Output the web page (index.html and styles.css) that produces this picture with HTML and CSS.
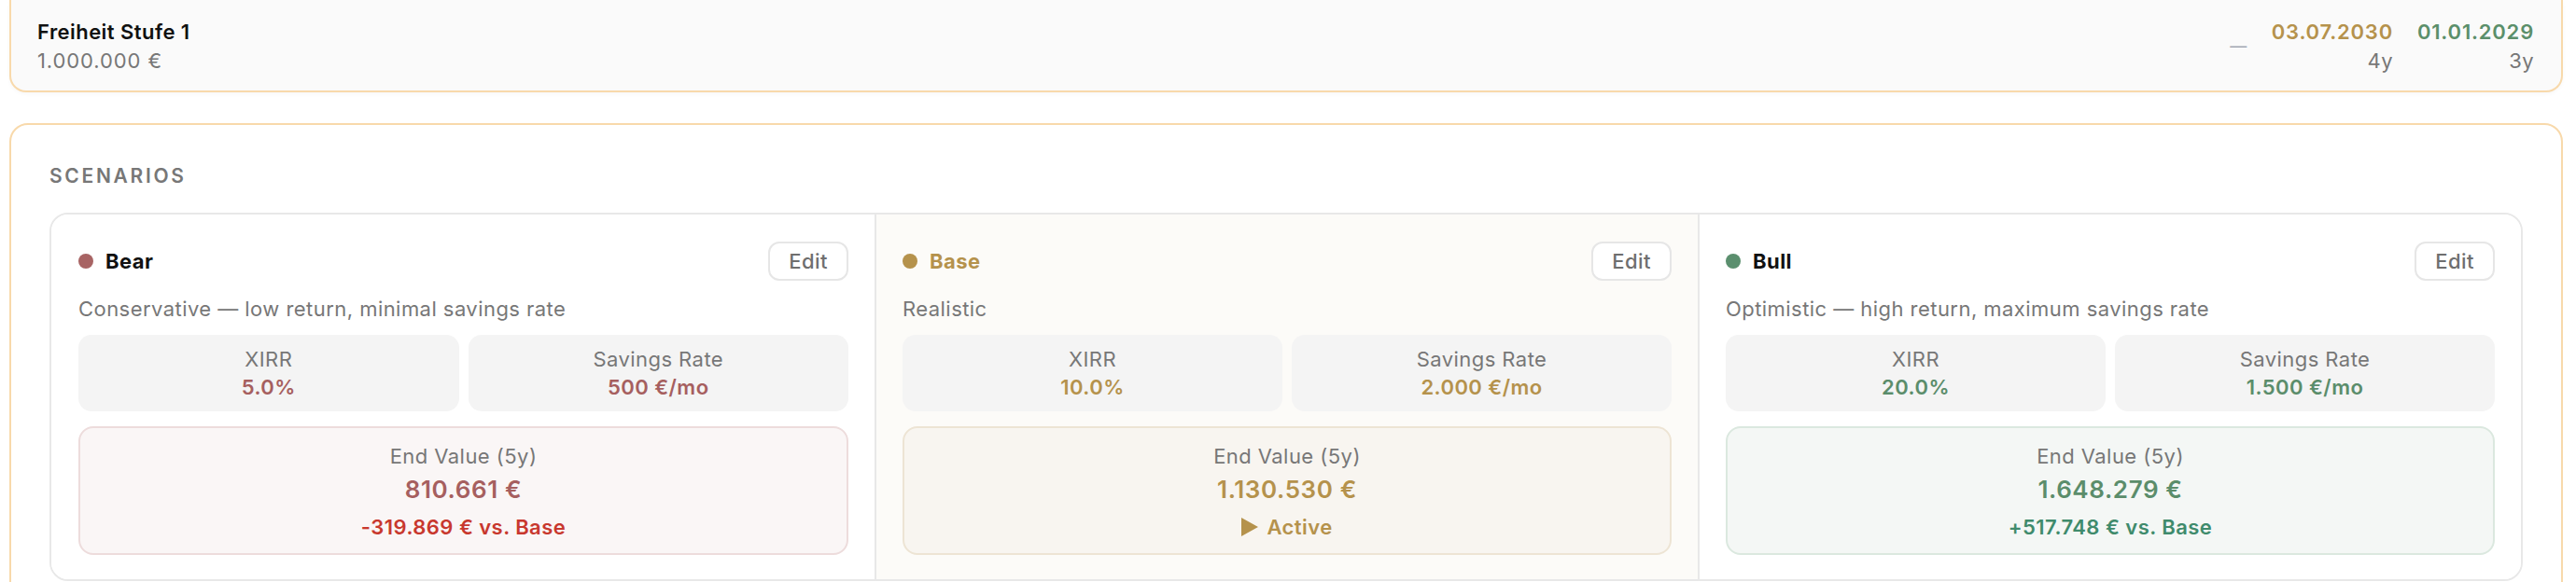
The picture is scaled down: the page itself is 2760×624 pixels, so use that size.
FILE: index.html
```html
<!DOCTYPE html>
<html lang="de">
<head>
<meta charset="utf-8">
<title>Scenarios</title>
<link rel="stylesheet" href="styles.css">
</head>
<body>
<div class="page">
  <div class="goal-card">
    <div class="goal-info">
      <div class="goal-title">Freiheit Stufe 1</div>
      <div class="goal-amount">1.000.000 €</div>
    </div>
    <div class="goal-dates">
      <span class="goal-dash">—</span>
      <div class="goal-date">
        <div class="date-val date-base">03.07.2030</div>
        <div class="date-sub">4y</div>
      </div>
      <div class="goal-date">
        <div class="date-val date-bull">01.01.2029</div>
        <div class="date-sub">3y</div>
      </div>
    </div>
  </div>

  <div class="scen-card">
    <div class="scen-heading">SCENARIOS</div>
    <div class="scen-grid">
      <div class="scen-col">
        <div class="scen-head">
          <div class="scen-name"><span class="dot dot-bear"></span><span class="name">Bear</span></div>
          <button class="edit-btn">Edit</button>
        </div>
        <div class="scen-desc">Conservative — low return, minimal savings rate</div>
        <div class="metrics">
          <div class="metric"><div class="m-label">XIRR</div><div class="m-val c-bear">5.0%</div></div>
          <div class="metric"><div class="m-label">Savings Rate</div><div class="m-val c-bear">500 €/mo</div></div>
        </div>
        <div class="endbox end-bear">
          <div class="e-label">End Value (5y)</div>
          <div class="e-val c-bear">810.661 €</div>
          <div class="e-delta d-neg">-319.869 € vs. Base</div>
        </div>
      </div>

      <div class="scen-col col-base">
        <div class="scen-head">
          <div class="scen-name"><span class="dot dot-base"></span><span class="name c-base">Base</span></div>
          <button class="edit-btn">Edit</button>
        </div>
        <div class="scen-desc">Realistic</div>
        <div class="metrics">
          <div class="metric"><div class="m-label">XIRR</div><div class="m-val c-base">10.0%</div></div>
          <div class="metric"><div class="m-label">Savings Rate</div><div class="m-val c-base">2.000 €/mo</div></div>
        </div>
        <div class="endbox end-base">
          <div class="e-label">End Value (5y)</div>
          <div class="e-val c-base">1.130.530 €</div>
          <div class="e-delta c-base"><svg class="tri" width="18" height="20" viewBox="0 0 18 20"><polygon points="0,0 18,10 0,20" fill="#b5924c"/></svg>Active</div>
        </div>
      </div>

      <div class="scen-col">
        <div class="scen-head">
          <div class="scen-name"><span class="dot dot-bull"></span><span class="name">Bull</span></div>
          <button class="edit-btn">Edit</button>
        </div>
        <div class="scen-desc">Optimistic — high return, maximum savings rate</div>
        <div class="metrics">
          <div class="metric"><div class="m-label">XIRR</div><div class="m-val c-bull">20.0%</div></div>
          <div class="metric"><div class="m-label">Savings Rate</div><div class="m-val c-bull">1.500 €/mo</div></div>
        </div>
        <div class="endbox end-bull">
          <div class="e-label">End Value (5y)</div>
          <div class="e-val c-bull">1.648.279 €</div>
          <div class="e-delta d-pos">+517.748 € vs. Base</div>
        </div>
      </div>
    </div>
  </div>
</div>
</body>
</html>
```

FILE: styles.css
```css
* { box-sizing: border-box; }
html, body { margin: 0; padding: 0; background: #ffffff; }
body {
  font-family: Inter, "Noto Sans", "DejaVu Sans", sans-serif;
  font-size: 22px;
  letter-spacing: 0.45px;
  color: #111111;
}
.page { padding: 0 14px 0 10px; }

.goal-card {
  display: flex;
  justify-content: space-between;
  align-items: center;
  background: #fafafa;
  border: 2px solid #f8d9ab;
  border-top: none;
  border-radius: 0 0 18px 18px;
  padding: 19px 29px 17px 28px;
  box-shadow: 0 2px 4px rgba(0,0,0,0.03);
}
.goal-title { font-weight: 600; line-height: 30px; color: #111; }
.goal-amount { line-height: 30px; color: #777777; margin-top: 1px; letter-spacing: 0.9px; }
.goal-dates { display: flex; align-items: center; gap: 26px; }
.goal-dash { color: #a3a8b3; font-size: 18px; line-height: 20px; }
.goal-date { text-align: right; }
.date-val { font-weight: 600; line-height: 30px; letter-spacing: 0.8px; }
.date-sub { line-height: 30px; color: #777777; margin-top: 1px; }
.date-base { color: #b5924c; }
.date-bull { color: #5b8f6a; }

.scen-card {
  margin-top: 33px;
  background: #ffffff;
  border: 2px solid #f8d9ab;
  border-radius: 20px;
  padding: 41px 41px 40px 41px;
}
.scen-heading {
  font-size: 21px;
  font-weight: 600;
  letter-spacing: 2.7px;
  color: #777777;
  line-height: 28px;
  margin-bottom: 25px;
}
.scen-grid {
  display: grid;
  grid-template-columns: 1fr 1fr 1fr;
  border: 2px solid #e8e8e8;
  border-radius: 20px;
  overflow: hidden;
}
.scen-col {
  padding: 29px 28px 26px 28px;
  border-left: 2px solid #e8e8e8;
  background: #ffffff;
}
.scen-col:first-child { border-left: none; padding-left: 29px; }
.col-base { background: #fcfbf8; }

.scen-head { display: flex; justify-content: space-between; align-items: center; height: 42px; }
.scen-name { display: flex; align-items: center; gap: 13px; }
.name { font-weight: 700; line-height: 30px; }
.dot { width: 16px; height: 16px; border-radius: 50%; display: inline-block; }
.dot-bear { background: #a86464; }
.dot-base { background: #b5924c; }
.dot-bull { background: #5b8f6e; }
.edit-btn {
  font-family: inherit;
  font-size: 22px;
  font-weight: 500;
  letter-spacing: 0.45px;
  color: #6f6f6f;
  background: #ffffff;
  border: 2px solid #e6e6e6;
  border-radius: 12px;
  height: 42px;
  padding: 0 20px;
  line-height: 36px;
}
.scen-desc { margin-top: 14px; line-height: 32px; color: #777777; }

.metrics { display: grid; grid-template-columns: 1fr 1fr; gap: 10px; margin-top: 12px; }
.metric {
  background: #f4f4f4;
  border-radius: 14px;
  padding: 11px 10px;
  text-align: center;
}
.m-label { line-height: 30px; color: #777777; }
.m-val { line-height: 30px; font-weight: 600; }

.endbox {
  margin-top: 16px;
  border: 2px solid #eee;
  border-radius: 16px;
  padding: 15px 20px 13px;
  text-align: center;
}
.end-bear { background: #faf6f6; border-color: #eddcdc; }
.end-base { background: #f8f5f0; border-color: #ede4d4; }
.end-bull { background: #f4f7f5; border-color: #dbe8df; }
.e-label { line-height: 30px; color: #777777; }
.e-val { margin-top: 4px; font-size: 26px; font-weight: 600; line-height: 34px; letter-spacing: 0.6px; }
.e-delta {
  margin-top: 8px;
  line-height: 30px;
  font-weight: 600;
  display: flex;
  justify-content: center;
  align-items: center;
  gap: 9px;
}
.tri { display: block; }
.d-neg { color: #c8382e; }
.d-pos { color: #3f8b6c; }

.c-bear { color: #a65f5f; }
.c-base { color: #b5924c; }
.c-bull { color: #5b8d6b; }
```
